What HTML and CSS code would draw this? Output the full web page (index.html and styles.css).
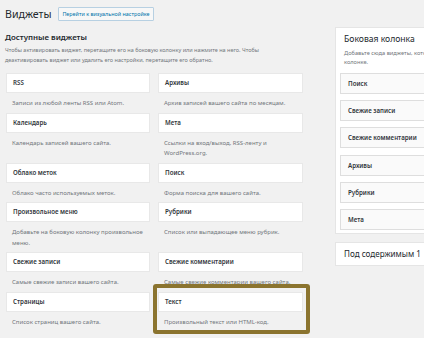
FILE: index.html
```html
<!DOCTYPE html>
<html lang="ru">
<head>
<meta charset="utf-8">
<title>Виджеты</title>
<link rel="stylesheet" href="styles.css">
</head>
<body>
<div class="page">
  <div class="header">
    <h1 class="title">Виджеты</h1>
    <a class="action" href="#">Перейти к визуальной настройке</a>
  </div>
  <div class="content">
    <div class="available">
      <h2 class="section-title">Доступные виджеты</h2>
      <p class="section-desc">Чтобы активировать виджет, перетащите его на боковую колонку или нажмите на него. Чтобы деактивировать виджет или удалить его настройки, перетащите его обратно.</p>
      <div class="grid">
        <div class="widget"><div class="w-box">RSS</div><div class="w-desc">Записи из любой ленты RSS или Atom.</div></div>
        <div class="widget"><div class="w-box">Архивы</div><div class="w-desc">Архив записей вашего сайта по месяцам.</div></div>
        <div class="widget"><div class="w-box">Календарь</div><div class="w-desc">Календарь записей вашего сайта.</div></div>
        <div class="widget"><div class="w-box">Мета</div><div class="w-desc">Ссылки на вход/выход, RSS-ленту и WordPress.org.</div></div>
        <div class="widget"><div class="w-box">Облако меток</div><div class="w-desc">Облако часто используемых меток.</div></div>
        <div class="widget"><div class="w-box">Поиск</div><div class="w-desc">Форма поиска для вашего сайта.</div></div>
        <div class="widget"><div class="w-box">Произвольное меню</div><div class="w-desc">Добавьте на боковую колонку произвольное меню.</div></div>
        <div class="widget"><div class="w-box">Рубрики</div><div class="w-desc">Список или выпадающее меню рубрик.</div></div>
        <div class="widget"><div class="w-box">Свежие записи</div><div class="w-desc">Самые свежие записи вашего сайта.</div></div>
        <div class="widget"><div class="w-box">Свежие комментарии</div><div class="w-desc">Самые свежие комментарии вашего сайта.</div></div>
        <div class="widget"><div class="w-box">Страницы</div><div class="w-desc">Список страниц вашего сайта.</div></div>
        <div class="widget highlighted"><div class="w-box">Текст</div><div class="w-desc">Произвольный текст или HTML-код.</div></div>
      </div>
    </div>
    <div class="sidebars">
      <div class="panel">
        <h2 class="panel-title">Боковая колонка</h2>
        <p class="panel-desc">Добавьте сюда виджеты, которые появятся в боковой<br>колонке.</p>
        <div class="s-list">
          <div class="s-box">Поиск</div>
          <div class="s-box">Свежие записи</div>
          <div class="s-box">Свежие комментарии</div>
          <div class="s-box">Архивы</div>
          <div class="s-box">Рубрики</div>
          <div class="s-box">Мета</div>
        </div>
      </div>
      <div class="panel closed">
        <h2 class="panel-title">Под содержимым 1</h2>
      </div>
    </div>
  </div>
</div>
</body>
</html>
```

FILE: styles.css
```css
html, body {
  margin: 0;
  padding: 0;
  overflow: hidden;
  background: #f1f1f1;
}
body {
  width: 424px;
  height: 338px;
  font-family: "Noto Sans", "Open Sans", sans-serif;
  color: #23282d;
}
.page {
  padding: 7px 0 0 5px;
}
.header {
  display: flex;
  align-items: center;
  gap: 7px;
  height: 14px;
}
.title {
  margin: 0;
  font-size: 10.6px;
  font-weight: 400;
  line-height: 14px;
  color: #23282d;
}
.action {
  display: block;
  height: 12px;
  line-height: 12px;
  padding: 0 3px;
  font-size: 5.4px;
  color: #0073aa;
  text-decoration: none;
  background: #f7f7f7;
  border: 1px solid #b7d0e2;
  border-radius: 1px;
}
.content {
  display: flex;
  margin-top: 6px;
}
.available {
  width: 298px;
  flex: none;
}
.section-title {
  margin: 4px 0 0;
  font-size: 7.9px;
  font-weight: 600;
  line-height: 12px;
  color: #23282d;
}
.section-desc {
  margin: 3px 0 0;
  font-size: 5.5px;
  line-height: 9.5px;
  color: #72777c;
  width: 290px;
}
.grid {
  margin: 8px 0 0 1px;
  display: grid;
  grid-template-columns: 144px 145px;
  column-gap: 8px;
  align-items: start;
}
.widget {
  position: relative;
}
.w-box {
  height: 18px;
  line-height: 18px;
  padding: 0 6px;
  background: #fff;
  border: 1px solid #e8e8e8;
  font-size: 6.2px;
  font-weight: 600;
  color: #32373c;
}
.w-desc {
  padding: 5px 1px 4px 6px;
  font-size: 6px;
  line-height: 10.5px;
  color: #72777c;
}
.highlighted::after {
  content: "";
  position: absolute;
  top: -8px;
  left: -5px;
  right: -7px;
  bottom: -3px;
  border: 4px solid #8b742f;
  border-radius: 3px;
  pointer-events: none;
}
.sidebars {
  margin-left: 32px;
  width: 130px;
  flex: none;
}
.panel {
  background: #fff;
  border: 1px solid #e5e5e5;
  padding: 5px 0 3px 4px;
}
.panel-title {
  margin: 0 0 0 4px;
  font-size: 8.6px;
  font-weight: 400;
  line-height: 12px;
  color: #23282d;
}
.panel-desc {
  margin: 3.5px 0 0 4px;
  font-size: 5.7px;
  line-height: 9px;
  color: #72777c;
  white-space: nowrap;
}
.s-list {
  margin-top: 6.5px;
  display: flex;
  flex-direction: column;
  gap: 6.2px;
}
.s-box {
  height: 19px;
  line-height: 19px;
  padding: 0 7px;
  background: #fafafa;
  border: 1px solid #dedede;
  font-size: 6.2px;
  font-weight: 600;
  color: #32373c;
}
.panel.closed {
  margin-top: 8px;
  padding: 0 0 0 4px;
  height: 22px;
  display: flex;
  align-items: center;
}
.closed .panel-title {
  font-size: 8.1px;
}
```
